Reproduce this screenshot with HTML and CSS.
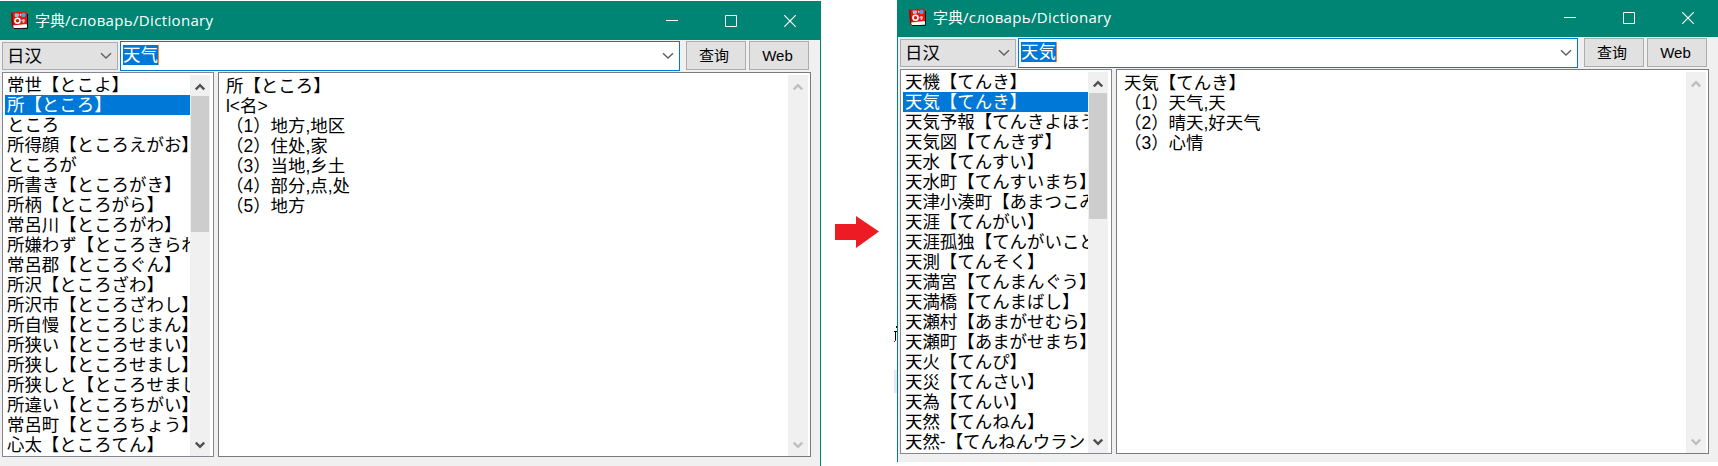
FILE: index.html
```
<!DOCTYPE html>
<html lang="ja">
<head>
<meta charset="utf-8">
<title>字典/словарь/Dictionary</title>
<link rel="stylesheet" href="styles.css">
</head>
<body>
<svg class="defs" width="0" height="0">
  <symbol id="book" viewBox="0 0 18 18">
    <path d="M0 1.500 15.500 .500 17 14 3 17.500 1 16z" fill="#e0160f"/>
    <path d="M0 1.500 1.500 2 3 17.500 1 16z" fill="#8c0a08"/>
    <path d="M2 14.500 15.500 13 16.500 16.500 3 17.500z" fill="#fff"/>
    <path d="M3 17.500H16.500V3" fill="none" stroke="#171313"/>
    <path d="M3.500 2.500h4l1 1.500L7 6H4z" fill="#aeb9d8"/>
    <circle cx="12.500" cy="4" r="2.200" fill="#4c9fe2"/>
    <path d="m9 2.500 1.500 1-1 2z" fill="#fff"/>
    <circle cx="6.500" cy="9.800" r="2.500" fill="#e0160f" stroke="#fff" stroke-width="1.600"/>
    <path d="M12.500 8v4M10.500 9.500H14" stroke="#f3b6c4" stroke-width="1.600"/>
  </symbol>
  <symbol id="down" viewBox="0 0 12 8"><path d="m1 1.200 5 4.800 5-4.800" fill="none" stroke="currentColor" stroke-width="1.400"/></symbol>
  <symbol id="sup" viewBox="0 0 10 8"><path d="M.8 6.500 5 2.200l4.200 4.300" fill="none" stroke="currentColor" stroke-width="2.400"/></symbol>
  <symbol id="sdown" viewBox="0 0 10 8"><path d="M.8 1.500 5 5.800l4.200-4.300" fill="none" stroke="currentColor" stroke-width="2.400"/></symbol>
  <symbol id="min" viewBox="0 0 12 12"><path d="M0 5.500h12" stroke="#fff"/></symbol>
  <symbol id="max" viewBox="0 0 12 12"><path d="M.5.5h11v11H.5z" fill="none" stroke="#fff"/></symbol>
  <symbol id="close" viewBox="0 0 12 12"><path d="m.3.3 11.400 11.400M11.700.3.3 11.700" stroke="#fff" stroke-width="1.200"/></symbol>
</svg>

<main class="stage">
  <section class="window first">
    <header class="titlebar">
      <svg class="app-icon"><use href="#book"/></svg>
      <h1 class="title">字典<span class="latin">/словарь/Dictionary</span></h1>
      <div class="controls">
        <svg class="control"><use href="#min"/></svg>
        <svg class="control"><use href="#max"/></svg>
        <svg class="control"><use href="#close"/></svg>
      </div>
    </header>
    <div class="toolbar">
      <div class="combo">日汉<svg class="chevron"><use href="#down"/></svg></div>
      <div class="search"><span class="selection">天气</span><svg class="chevron"><use href="#down"/></svg></div>
      <button class="button query">查询</button>
      <button class="button web">Web</button>
    </div>
    <div class="panes">
      <div class="list">
        <ul class="words">
          <li>常世【とこよ】</li>
          <li class="current">所【ところ】</li>
          <li>ところ</li>
          <li>所得顔【ところえがお】</li>
          <li>ところが</li>
          <li>所書き【ところがき】</li>
          <li>所柄【ところがら】</li>
          <li>常呂川【ところがわ】</li>
          <li>所嫌わず【ところきらわ</li>
          <li>常呂郡【ところぐん】</li>
          <li>所沢【ところざわ】</li>
          <li>所沢市【ところざわし】</li>
          <li>所自慢【ところじまん】</li>
          <li>所狭い【ところせまい】</li>
          <li>所狭し【ところせまし】</li>
          <li>所狭しと【ところせまし</li>
          <li>所違い【ところちがい】</li>
          <li>常呂町【ところちょう】</li>
          <li>心太【ところてん】</li>
        </ul>
        <div class="scrollbar"><svg class="arrow"><use href="#sup"/></svg><div class="thumb tall"></div><svg class="arrow"><use href="#sdown"/></svg></div>
      </div>
      <div class="detail">
        <div class="entry" lang="zh-CN">
          <p>所【ところ】</p>
          <p>l&lt;名&gt;</p>
          <p>（1）地方,地区</p>
          <p>（2）住处,家</p>
          <p>（3）当地,乡土</p>
          <p>（4）部分,点,处</p>
          <p>（5）地方</p>
        </div>
        <div class="scrollbar disabled"><svg class="arrow"><use href="#sup"/></svg><svg class="arrow"><use href="#sdown"/></svg></div>
      </div>
    </div>
  </section>

  <div class="between">
    <svg class="next" viewBox="0 0 44 32"><path d="M0 8h21V0l23 15.500L21 32v-8H0z" fill="#ed1c24"/></svg>
    <svg class="sliver" viewBox="0 0 3 67"><path d="M2 0h1v2H2zM0 5h3v1H2v8H1V6H0z" fill="#000"/><path d="M0 15h1v-1h1v1H1v1H0z" fill="#f00"/><path d="M0 44h3v23H0z" fill="#e6e6fa"/></svg>
  </div>

  <section class="window second">
    <header class="titlebar">
      <svg class="app-icon"><use href="#book"/></svg>
      <h1 class="title">字典<span class="latin">/словарь/Dictionary</span></h1>
      <div class="controls">
        <svg class="control"><use href="#min"/></svg>
        <svg class="control"><use href="#max"/></svg>
        <svg class="control"><use href="#close"/></svg>
      </div>
    </header>
    <div class="toolbar">
      <div class="combo">日汉<svg class="chevron"><use href="#down"/></svg></div>
      <div class="search"><span class="selection">天気</span><svg class="chevron"><use href="#down"/></svg></div>
      <button class="button query">查询</button>
      <button class="button web">Web</button>
    </div>
    <div class="panes">
      <div class="list">
        <ul class="words">
          <li>天機【てんき】</li>
          <li class="current">天気【てんき】</li>
          <li>天気予報【てんきよほう</li>
          <li>天気図【てんきず】</li>
          <li>天水【てんすい】</li>
          <li>天水町【てんすいまち】</li>
          <li>天津小湊町【あまつこみ</li>
          <li>天涯【てんがい】</li>
          <li>天涯孤独【てんがいこど</li>
          <li>天測【てんそく】</li>
          <li>天満宮【てんまんぐう】</li>
          <li>天満橋【てんまばし】</li>
          <li>天瀬村【あまがせむら】</li>
          <li>天瀬町【あまがせまち】</li>
          <li>天火【てんぴ】</li>
          <li>天災【てんさい】</li>
          <li>天為【てんい】</li>
          <li>天然【てんねん】</li>
          <li>天然-【てんねんウラン</li>
        </ul>
        <div class="scrollbar"><svg class="arrow"><use href="#sup"/></svg><div class="thumb"></div><svg class="arrow"><use href="#sdown"/></svg></div>
      </div>
      <div class="detail">
        <div class="entry" lang="zh-CN">
          <p>天気【てんき】</p>
          <p>（1）天气,天</p>
          <p>（2）晴天,好天气</p>
          <p>（3）心情</p>
        </div>
        <div class="scrollbar disabled"><svg class="arrow"><use href="#sup"/></svg><svg class="arrow"><use href="#sdown"/></svg></div>
      </div>
    </div>
  </section>
</main>
</body>
</html>
```
FILE: styles.css
```
* { box-sizing: border-box; margin: 0; padding: 0; }
body { background: #fff; overflow: hidden; font: 400 17.45px/20px "Liberation Sans", "Noto Sans CJK JP", sans-serif; color: #000; }
svg { display: block; flex: none; }
.defs { position: absolute; }
.stage { display: flex; align-items: flex-start; width: 1718px; height: 466px; overflow: hidden; }

.window { flex: none; width: 821px; background: #f0f0f0; }
.first { margin-top: 1px; height: 465px; border-right: 1px solid #008575; }
.second { margin-top: -2px; height: 464px; border-left: 1px solid #008575; }

.titlebar { display: flex; align-items: center; height: 39px; padding-left: 11px; background: #008575; color: #fff; }
.app-icon { width: 18px; height: 18px; margin-bottom: 1px; }
.title { margin-left: 6px; padding-bottom: 1px; font: 400 15px/20px "Noto Sans CJK SC", sans-serif; white-space: nowrap; }
.latin { font-family: "Open Sans", "Noto Sans", sans-serif; font-weight: 400; letter-spacing: .34px; }
.controls { display: flex; gap: 47px; margin-left: auto; padding-right: 24px; }
.control { width: 12px; height: 12px; }

.toolbar { display: flex; align-items: flex-start; padding: 1px 0 0 2px; height: 32px; font-family: "Liberation Sans", "Noto Sans CJK SC", sans-serif; }
.combo { display: flex; align-items: center; justify-content: space-between; width: 116px; height: 28px; margin-top: 1px; padding: 0 5px 0 4px; border: 1px solid #adadad; background: #e1e1e1; }
.chevron { width: 12px; height: 8px; color: #606060; }
.search { display: flex; align-items: center; justify-content: space-between; width: 560px; height: 30px; margin-left: 2px; padding: 0 5px 0 2px; border: 1px solid #0078d7; background: #fff; }
.selection { height: 20px; margin-top: -2px; background: #0078d7; color: #fff; border-right: 1px solid #ff8728; line-height: 20px; }
.button { width: 60px; height: 29px; border: 1px solid #adadad; background: #e1e1e1; font: 400 15px/20px "Liberation Sans", "Noto Sans CJK SC", sans-serif; color: #000; }
.query { margin-left: 6px; padding-right: 4px; }
.web { margin-left: 3px; padding-right: 3px; }

.panes { display: flex; gap: 4px; padding-left: 2px; }
.list, .detail { display: flex; height: 385px; border: 1px solid #828790; background: #fff; }
.list { width: 212px; padding: 2px 3px 0 2px; }
.words { flex: 1; min-width: 0; list-style: none; overflow: hidden; }
.words li { height: 20px; padding-left: 2px; white-space: nowrap; overflow: hidden; }
.words .current { background: #0078d7; color: #fff; }
.detail { width: 593px; padding: 2px 2px 0 7px; border-color: #7a7a7a; }
.entry { flex: 1; padding-top: 1px; font-family: "Liberation Sans", "Noto Sans CJK SC", sans-serif; }
.scrollbar { display: flex; flex-direction: column; align-items: center; width: 20px; padding: 8px 0 7px; background: #f0f0f0; color: #505050; }
.arrow { width: 10px; height: 8px; }
.scrollbar .arrow:last-child { margin-top: auto; }
.thumb { width: 18px; height: 126px; margin-top: 5px; background: #cdcdcd; }
.tall { height: 136px; }
.disabled { color: #bfbfbf; }

.between { display: grid; grid-template-columns: 44px 3px; justify-content: end; align-items: start; column-gap: 15px; width: 76px; flex: none; }
.next { width: 44px; height: 32px; margin-top: 216px; }
.sliver { width: 3px; height: 67px; margin-top: 326px; }
```
